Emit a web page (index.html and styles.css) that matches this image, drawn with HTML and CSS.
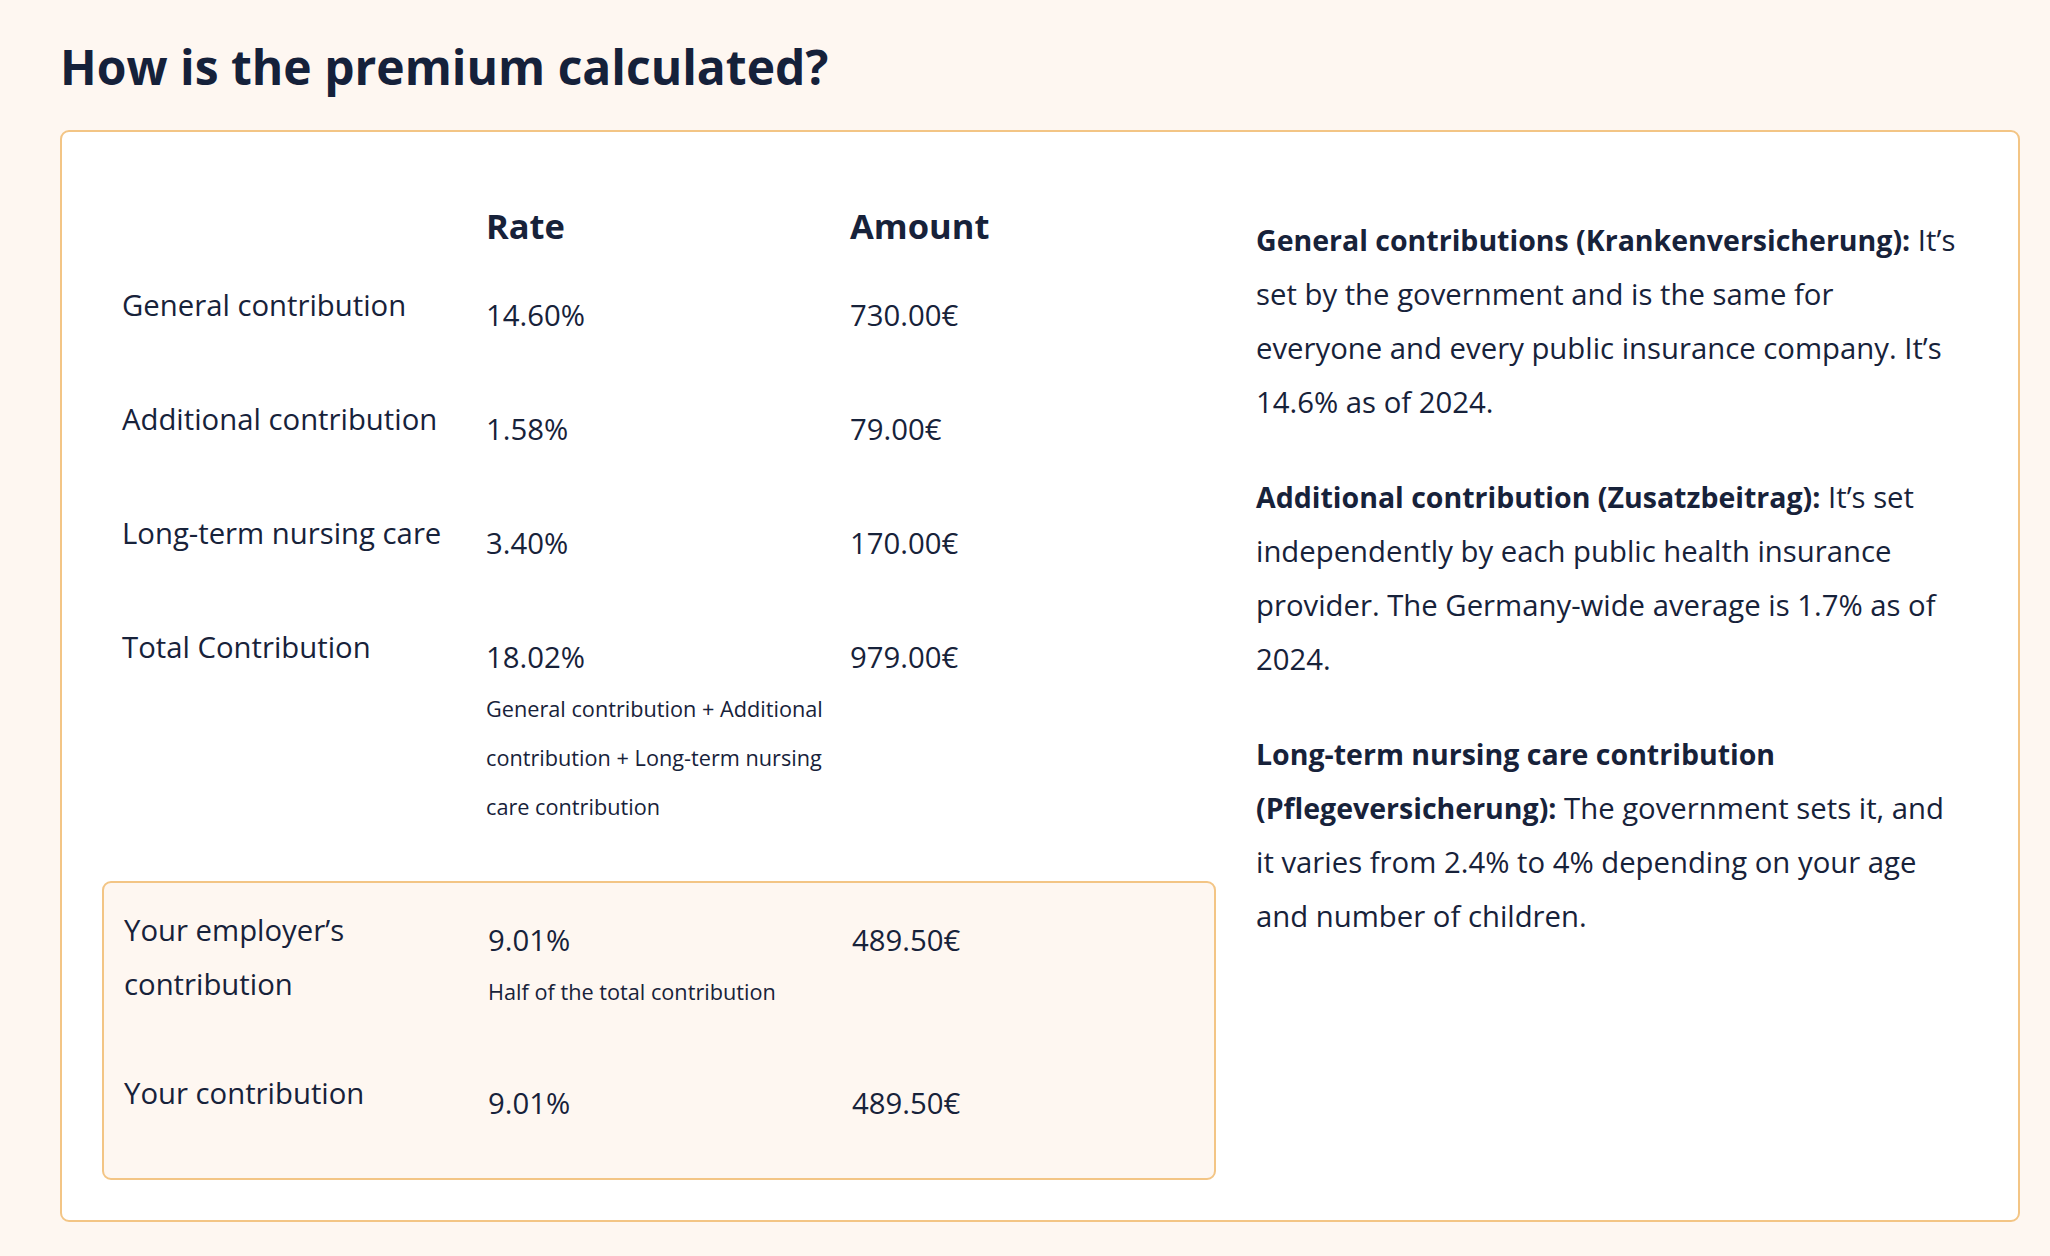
FILE: index.html
```html
<!DOCTYPE html>
<html lang="en">
<head>
<meta charset="utf-8">
<title>How is the premium calculated?</title>
<link rel="stylesheet" href="styles.css">
</head>
<body>
<main class="page">
  <h1 class="title">How is the premium calculated?</h1>
  <section class="card">
    <div class="calc">
      <div class="row head">
        <div></div>
        <div class="colhead">Rate</div>
        <div class="colhead">Amount</div>
      </div>
      <div class="row">
        <div class="label">General contribution</div>
        <div class="val">14.60%</div>
        <div class="val">730.00€</div>
      </div>
      <div class="row">
        <div class="label">Additional contribution</div>
        <div class="val">1.58%</div>
        <div class="val">79.00€</div>
      </div>
      <div class="row">
        <div class="label">Long-term nursing care</div>
        <div class="val">3.40%</div>
        <div class="val">170.00€</div>
      </div>
      <div class="row">
        <div class="label">Total Contribution</div>
        <div class="val">18.02%<span class="note">General contribution + Additional<br>contribution + Long-term nursing<br>care contribution</span></div>
        <div class="val">979.00€</div>
      </div>
      <div class="highlight">
        <div class="row">
          <div class="label">Your employer’s<br>contribution</div>
          <div class="val">9.01%<span class="note">Half of the total contribution</span></div>
          <div class="val">489.50€</div>
        </div>
        <div class="row">
          <div class="label">Your contribution</div>
          <div class="val">9.01%</div>
          <div class="val">489.50€</div>
        </div>
      </div>
    </div>
    <div class="explain">
      <p><strong>General contributions (Krankenversicherung):</strong> It’s<br>set by the government and is the same for<br>everyone and every public insurance company. It’s<br>14.6% as of 2024.</p>
      <p><strong>Additional contribution (Zusatzbeitrag):</strong> It’s set<br>independently by each public health insurance<br>provider. The Germany-wide average is 1.7% as of<br>2024.</p>
      <p><strong>Long-term nursing care contribution<br>(Pflegeversicherung):</strong> The government sets it, and<br>it varies from 2.4% to 4% depending on your age<br>and number of children.</p>
    </div>
  </section>
</main>
</body>
</html>
```
FILE: styles.css
```css
html, body {
  margin: 0;
  padding: 0;
}
body {
  background: #fef7f1;
  color: #17223a;
  font-family: "Open Sans", "Noto Sans", sans-serif;
}
.page {
  padding: 38px 30px 36px 60px;
}
.title {
  margin: 0 0 34px;
  font-size: 48px;
  line-height: 57.6px;
  font-weight: 700;
  color: #15213a;
}
.card {
  display: flex;
  gap: 40px;
  width: 1876px;
  background: #ffffff;
  border: 2px solid #f3c585;
  border-radius: 9px;
  padding: 72px 40px 40px;
}
.calc {
  width: 1114px;
  flex: none;
}
.row {
  display: grid;
  grid-template-columns: 364px 364px 1fr;
  padding: 0 20px;
  margin-bottom: 50px;
  font-size: 29.3px;
  line-height: 54px;
}
.row.head {
  margin-bottom: 30px;
}
.colhead {
  font-size: 34.5px;
  line-height: 44px;
  font-weight: 700;
}
.label {
  white-space: nowrap;
}
.val {
  padding-top: 10px;
  white-space: nowrap;
}
.note {
  display: block;
  font-size: 21.7px;
  line-height: 49px;
}
.highlight {
  background: #fef7f1;
  border: 2px solid #f3c585;
  border-radius: 9px;
  padding: 20px 0 48px;
}
.highlight .row {
  padding: 0 20px;
}
.highlight .row:last-child {
  margin-bottom: 0;
}
.explain {
  width: 722px;
  flex: none;
  padding-top: 9px;
  font-size: 29.3px;
  line-height: 54px;
}
.explain p {
  margin: 0 0 41px;
  white-space: nowrap;
}
.explain strong {
  font-weight: 700;
  font-size: 28.5px;
}
```
